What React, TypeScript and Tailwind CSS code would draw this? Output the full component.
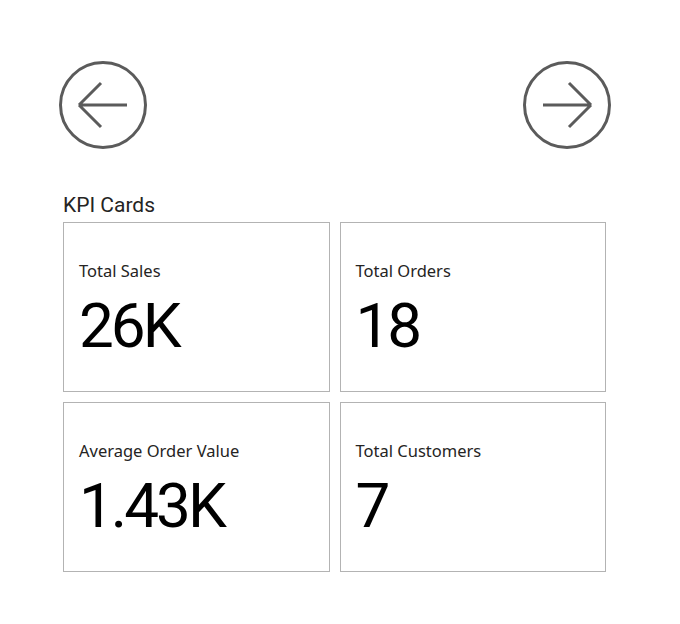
const cards = [
  { label: "Total Sales", value: "26K" },
  { label: "Total Orders", value: "18" },
  { label: "Average Order Value", value: "1.43K" },
  { label: "Total Customers", value: "7" },
]

function NavButton({ dir }: { dir: "left" | "right" }) {
  return (
    <svg width="88" height="88" viewBox="0 0 88 88" fill="none" aria-hidden>
      <circle cx="44" cy="44" r="42.5" stroke="#5b5b5b" strokeWidth="3" />
      {dir === "left" ? (
        <path d="M20 44H68M20 44L42 22M20 44L42 66" stroke="#5b5b5b" strokeWidth="3" />
      ) : (
        <path d="M20 44H68M68 44L46 22M68 44L46 66" stroke="#5b5b5b" strokeWidth="3" />
      )}
    </svg>
  )
}

function KpiCard({ label, value }: { label: string; value: string }) {
  return (
    <div className="h-[170px] border border-[#b3b3b3] bg-white pl-[15px] pt-[38px]">
      <div className="font-['Noto_Sans',sans-serif] text-[16.5px] leading-[20px] text-[#252423]">{label}</div>
      <div className="mt-[14px] font-['Roboto',sans-serif] text-[62px] leading-[62px] tracking-[-3px] text-black">
        {value}
      </div>
    </div>
  )
}

export default function App() {
  return (
    <div className="h-[624px] w-[680px] bg-white">
      <div className="ml-[59px] flex w-[552px] justify-between pt-[61px]">
        <NavButton dir="left" />
        <NavButton dir="right" />
      </div>
      <div className="ml-[63px] mt-[44px] w-[543px]">
        <div className="mb-[5px] font-['Roboto',sans-serif] text-[21px] leading-[24px] text-[#252423]">KPI Cards</div>
        <div className="grid grid-cols-2 gap-[10px]">
          {cards.map((c) => (
            <KpiCard key={c.label} label={c.label} value={c.value} />
          ))}
        </div>
      </div>
    </div>
  )
}
